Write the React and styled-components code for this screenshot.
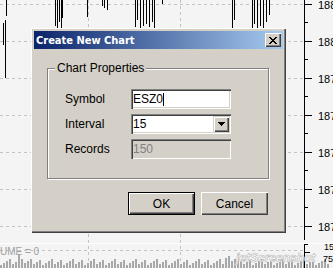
import React from 'react';
import styled, { createGlobalStyle } from 'styled-components';

const Global = createGlobalStyle`
  html, body { margin: 0; padding: 0; background: #f4f4f4; }
  body { width: 333px; height: 268px; overflow: hidden; }
`;

const Screen = styled.div`
  position: relative;
  width: 333px;
  height: 268px;
  overflow: hidden;
  background: #f4f4f4;
  font-family: "Liberation Sans Narrow", "Liberation Sans", Arial, sans-serif;
`;

const ChartSvg = styled.svg`
  display: block;
`;

const Dialog = styled.div`
  position: absolute;
  left: 31px;
  top: 28px;
  width: 255px;
  box-sizing: border-box;
  padding: 3px;
  background: #d4d0c8;
  display: flex;
  flex-direction: column;
  box-shadow: inset 1px 1px #ffffff, inset -1px -1px #404040, inset -2px -2px #808080;
`;

const TitleBar = styled.div`
  height: 18px;
  display: flex;
  align-items: center;
  justify-content: space-between;
  padding: 0 2px 0 2px;
  background: linear-gradient(to right, #0a246a, #a6caf0);
  color: #ffffff;
  font: bold 11px "DejaVu Sans Condensed", "DejaVu Sans", sans-serif;
`;

const CloseButton = styled.div`
  width: 16px;
  height: 14px;
  box-sizing: border-box;
  display: flex;
  align-items: center;
  justify-content: center;
  background: #d4d0c8;
  box-shadow: inset 1px 1px #ffffff, inset -1px -1px #404040, inset -2px -2px #808080;
`;

const Group = styled.fieldset`
  margin: 13px 14px 13px 13px;
  padding: 0;
  min-width: 0;
  border: 1px solid #808080;
  box-shadow: 1px 1px 0 #ffffff, inset 1px 1px 0 #ffffff;
`;

const Legend = styled.legend`
  margin-left: 7px;
  padding: 0 2px;
  background: #d4d0c8;
  font-size: 12px;
  line-height: 13px;
  color: #000;
`;

const Rows = styled.div`
  display: grid;
  grid-template-columns: 66px 100px;
  grid-auto-rows: 20px;
  row-gap: 5px;
  align-items: center;
  padding: 14px 0 19px 17px;
`;

const Label = styled.span`
  font-size: 12px;
  color: #000;
`;

const Field = styled.div`
  height: 20px;
  box-sizing: border-box;
  display: flex;
  align-items: center;
  padding: 0 2px;
  font-size: 12px;
  background: ${p => (p.$disabled ? '#d4d0c8' : '#ffffff')};
  color: ${p => (p.$disabled ? '#808080' : '#000000')};
  box-shadow: inset 1px 1px #808080, inset 2px 2px #404040, inset -1px -1px #ffffff, inset -2px -2px #d4d0c8;
`;

const Caret = styled.span`
  display: inline-block;
  width: 1px;
  height: 13px;
  background: #000;
`;

const DropButton = styled.div`
  margin-left: auto;
  width: 16px;
  height: 16px;
  box-sizing: border-box;
  display: flex;
  align-items: center;
  justify-content: center;
  background: #d4d0c8;
  box-shadow: inset 1px 1px #d4d0c8, inset 2px 2px #ffffff, inset -1px -1px #404040, inset -2px -2px #808080;
`;

const ButtonRow = styled.div`
  display: flex;
  justify-content: flex-end;
  gap: 6px;
  padding: 0 15px 15px 0;
`;

const PushButton = styled.button`
  width: 67px;
  height: 23px;
  box-sizing: border-box;
  border: none;
  margin: 0;
  padding: 0;
  background: #d4d0c8;
  color: #000;
  font-family: "Liberation Sans Narrow", "Liberation Sans", Arial, sans-serif;
  font-size: 12px;
  box-shadow: ${p =>
    p.$default
      ? 'inset 0 0 0 1px #000000, inset 2px 2px #ffffff, inset -2px -2px #404040, inset -3px -3px #808080'
      : 'inset 1px 1px #ffffff, inset -1px -1px #404040, inset -2px -2px #808080'};
`;

const CloseGlyph = () => (
  <svg width="8" height="7" viewBox="0 0 8 7" shapeRendering="crispEdges">
    <rect x="0" y="0" width="2" height="1" fill="#000" />
    <rect x="6" y="0" width="2" height="1" fill="#000" />
    <rect x="1" y="1" width="2" height="1" fill="#000" />
    <rect x="5" y="1" width="2" height="1" fill="#000" />
    <rect x="2" y="2" width="4" height="1" fill="#000" />
    <rect x="3" y="3" width="2" height="1" fill="#000" />
    <rect x="2" y="4" width="4" height="1" fill="#000" />
    <rect x="1" y="5" width="2" height="1" fill="#000" />
    <rect x="5" y="5" width="2" height="1" fill="#000" />
    <rect x="0" y="6" width="2" height="1" fill="#000" />
    <rect x="6" y="6" width="2" height="1" fill="#000" />
  </svg>
);

const DownArrow = () => (
  <svg width="7" height="4" viewBox="0 0 7 4" shapeRendering="crispEdges">
    <polygon points="0,0 7,0 3.5,4" fill="#000" />
  </svg>
);

const bars = [
  [3, 23, 45], [5, 20, 78], [6, 0, 16],
  [55, 0, 26], [57, 0, 29], [59, 0, 22], [61, 0, 29], [62, 0, 18],
  [87, 0, 17], [102, 0, 6], [104, 0, 8], [107, 0, 10],
  [135, 0, 27], [137, 0, 20], [140, 0, 28], [143, 0, 26], [146, 0, 24],
  [149, 0, 27], [152, 0, 22], [154, 0, 28], [162, 0, 4],
  [232, 0, 28], [234, 0, 20],
  [252, 0, 28], [254, 0, 24], [257, 0, 28], [260, 0, 26], [263, 0, 28],
  [266, 0, 22], [269, 0, 15],
];

const hLines = [4, 41, 78, 115, 152, 189, 226];
const labels = ['188', '188', '187', '187', '187', '187', '187'];

const volume = Array.from({ length: 110 }, (_, i) => {
  const x = i * 3;
  const h = 3 + ((i * 37) % 7) + (i === 6 || i === 7 ? 6 : 0) + (i > 74 && i < 80 ? 4 : 0);
  return [x, h];
});

const Chart = () => (
  <ChartSvg width="333" height="268" viewBox="0 0 333 268">
    <rect width="333" height="268" fill="#f4f4f4" />
    {hLines.map(y => (
      <line key={y} x1="0" x2="304" y1={y + 0.5} y2={y + 0.5} stroke="#c4c4c4" strokeDasharray="3 3" />
    ))}
    <line x1="88.5" x2="88.5" y1="0" y2="268" stroke="#c4c4c4" strokeDasharray="3 3" />
    <line x1="180.5" x2="180.5" y1="0" y2="268" stroke="#c4c4c4" strokeDasharray="3 3" />
    {bars.map(([x, y1, y2], i) => (
      <line key={i} x1={x + 0.5} x2={x + 0.5} y1={y1} y2={y2} stroke="#000" />
    ))}
    <line x1="304.5" x2="304.5" y1="0" y2="240" stroke="#000" />
    {hLines.map((y, i) => (
      <g key={'t' + y}>
        <line x1="304" x2="312" y1={y + 0.5} y2={y + 0.5} stroke="#000" />
        <line x1="304" x2="308" y1={y + 18.5} y2={y + 18.5} stroke="#000" />
        <text x="318" y={y + 4.5} fontSize="11" fontFamily="Liberation Sans, Arial, sans-serif" fill="#000">
          {labels[i]}
        </text>
      </g>
    ))}
    <line x1="0" x2="333" y1="243.5" y2="243.5" stroke="#ffffff" />
    <line x1="0" x2="304" y1="250.5" y2="250.5" stroke="#c4c4c4" strokeDasharray="3 3" />
    <text x="0" y="255" fontSize="10" fontFamily="Liberation Sans, Arial, sans-serif" fill="#a0a0a0">UME = 0</text>
    {volume.map(([x, h], i) => (
      <rect key={'v' + i} x={x} y={268 - h} width="2" height={h} fill="#a8a8a8" />
    ))}
    <line x1="304.5" x2="304.5" y1="244" y2="268" stroke="#000" />
    <line x1="304" x2="310" y1="252.5" y2="252.5" stroke="#000" />
    <text x="324" y="250" fontSize="9" fontFamily="Liberation Sans, Arial, sans-serif" fill="#000">15</text>
    <text x="323" y="262" fontSize="9" fontFamily="Liberation Sans, Arial, sans-serif" fill="#000">75</text>
    <text x="236" y="262" fontSize="12" fontStyle="italic" fontWeight="bold" fontFamily="Liberation Sans, Arial, sans-serif" fill="#ffffff" stroke="#b8b8b8" strokeWidth="0.6">jetScreenshot</text>
  </ChartSvg>
);

export default function App() {
  return (
    <Screen>
      <Global />
      <Chart />
      <Dialog>
        <TitleBar>
          <span>Create New Chart</span>
          <CloseButton>
            <CloseGlyph />
          </CloseButton>
        </TitleBar>
        <Group>
          <Legend>Chart Properties</Legend>
          <Rows>
            <Label>Symbol</Label>
            <Field>
              ESZ0
              <Caret />
            </Field>
            <Label>Interval</Label>
            <Field>
              15
              <DropButton>
                <DownArrow />
              </DropButton>
            </Field>
            <Label>Records</Label>
            <Field $disabled>150</Field>
          </Rows>
        </Group>
        <ButtonRow>
          <PushButton $default>OK</PushButton>
          <PushButton>Cancel</PushButton>
        </ButtonRow>
      </Dialog>
    </Screen>
  );
}
